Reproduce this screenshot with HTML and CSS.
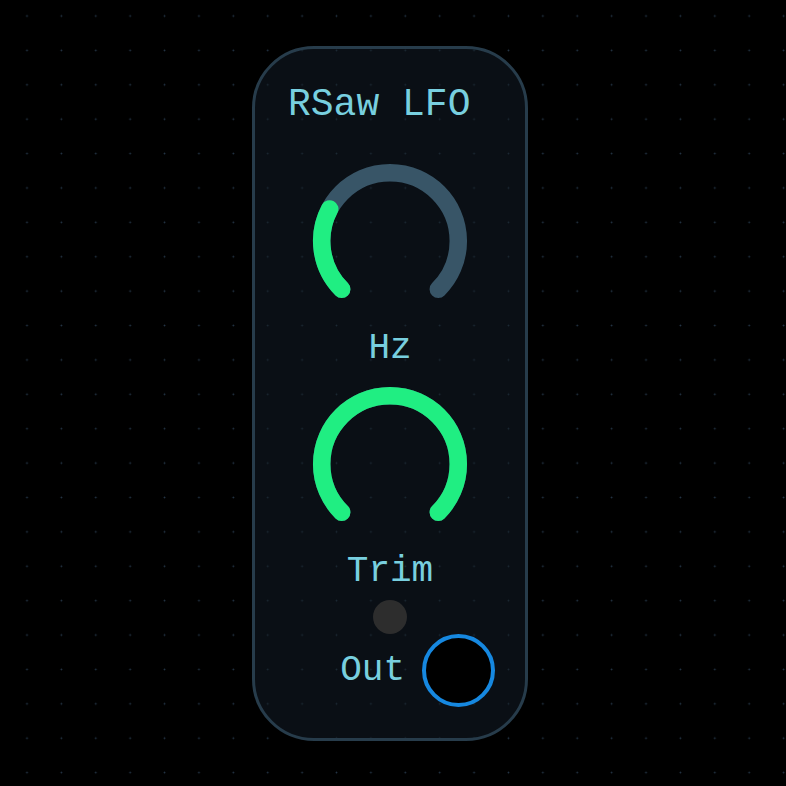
FILE: index.html
```html
<!DOCTYPE html>
<html>
<head>
<meta charset="utf-8">
<link rel="stylesheet" href="styles.css">
</head>
<body>
<div class="panel">
  <div class="title">RSaw LFO</div>
  <svg class="knob knob-first" width="160" height="160" viewBox="0 0 160 160">
    <path class="track" d="M31.7 128.3 A68.3 68.3 0 1 1 128.3 128.3"/>
    <path class="value" d="M31.7 128.3 A68.3 68.3 0 0 1 19.7 47.93"/>
  </svg>
  <div class="label">Hz</div>
  <svg class="knob knob-second" width="160" height="160" viewBox="0 0 160 160">
    <path class="track" d="M31.7 128.3 A68.3 68.3 0 1 1 128.3 128.3"/>
    <path class="value" d="M31.7 128.3 A68.3 68.3 0 1 1 128.3 128.3"/>
  </svg>
  <div class="label">Trim</div>
  <div class="led"></div>
  <div class="out-row">
    <span class="out-label">Out</span>
    <div class="jack"></div>
  </div>
</div>
</body>
</html>
```

FILE: styles.css
```css
html, body {
  margin: 0;
  padding: 0;
}

body {
  width: 786px;
  height: 786px;
  overflow: hidden;
  background-color: #000;
  background-image: radial-gradient(circle, #26384a 0, #26384a 0.6px, transparent 1.2px);
  background-size: 34.4px 34.4px;
  background-position: 9.8px -1.2px;
  font-family: "Liberation Mono", "DejaVu Sans Mono", monospace;
  color: #78cfdf;
}

.panel {
  box-sizing: border-box;
  width: 276px;
  height: 695px;
  margin: 46px 0 0 252px;
  border: 3px solid #273c4b;
  border-radius: 62px;
  background-color: #0a0f15;
  background-image: radial-gradient(circle, #1c2a35 0, #1c2a35 0.6px, transparent 1.2px);
  background-size: 34.4px 34.4px;
  background-position: 9.8px -1.2px;
  background-attachment: fixed;
  padding: 36px 30px 31px 33px;
  display: flex;
  flex-direction: column;
  align-items: center;
}

.title {
  align-self: flex-start;
  font-size: 38px;
  line-height: 40px;
  height: 40px;
  white-space: nowrap;
}

.knob {
  display: block;
  flex: none;
  margin-left: -3px;
}

.knob-first {
  margin-top: 36px;
}

.knob-second {
  margin-top: 15px;
}

.track {
  fill: none;
  stroke: #385567;
  stroke-width: 17.5;
  stroke-linecap: round;
}

.value {
  fill: none;
  stroke: #20ee82;
  stroke-width: 17.5;
  stroke-linecap: round;
}

.label {
  margin-top: 8px;
  margin-left: -3px;
  font-size: 36px;
  line-height: 40px;
  height: 40px;
  white-space: nowrap;
}

.led {
  margin-top: 8px;
  margin-left: -3px;
  width: 34px;
  height: 34px;
  border-radius: 50%;
  background: #2d2d2d;
  flex: none;
}

.out-row {
  align-self: stretch;
  display: flex;
  flex-direction: row;
  justify-content: flex-end;
  align-items: center;
  gap: 17px;
}

.out-label {
  font-size: 36px;
  line-height: 40px;
  white-space: nowrap;
}

.jack {
  box-sizing: border-box;
  width: 73px;
  height: 73px;
  border-radius: 50%;
  border: 4px solid #1688e0;
  background: #000;
  flex: none;
}
```
